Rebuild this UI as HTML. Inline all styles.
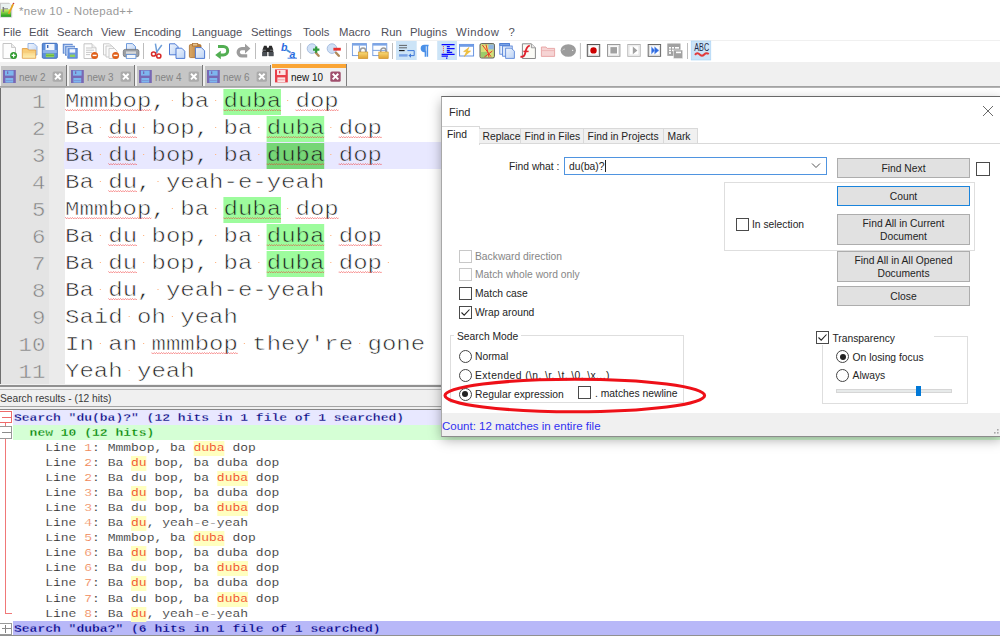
<!DOCTYPE html>
<html lang="en"><head><meta charset="utf-8"><title>*new 10 - Notepad++</title>
<style>
*{box-sizing:border-box;margin:0;padding:0}
html,body{width:1000px;height:639px;overflow:hidden;background:#fff}
body{position:relative;font-family:"Liberation Sans",sans-serif;font-size:12px;color:#000}
.abs{position:absolute}
#title{left:19px;top:3px;font-size:11.5px;letter-spacing:.3px;color:#9a9a9a;white-space:nowrap;line-height:16px}
.mi{position:absolute;top:24px;font-size:11.3px;color:#50505a;line-height:16px;white-space:nowrap}
#tbline{left:0;top:61.6px;width:1000px;height:1px;background:#e4e4e4}
#menuline{left:0;top:40px;width:1000px;height:1px;background:#f0f0f0}
#tabbar{left:0;top:62px;width:1000px;height:25px;background:#f0f0f0}
.tab{position:absolute;top:65.6px;height:20.2px;background:#c6c6c6;font-size:11.5px;color:#848484;white-space:nowrap}
.tab span{position:absolute;left:18px;top:4.4px;line-height:14px;transform:scaleX(.86);transform-origin:0 0}
.tabsep{position:absolute;top:65px;width:1px;height:21px;background:#787878}
#atab{position:absolute;left:272px;top:64px;width:75px;height:23px;background:#f0f0f0;border-right:1px solid #808080}
#atab .bar{position:absolute;left:0;top:0;width:74px;height:4px;background:#faa535}
#atab span{position:absolute;left:19px;top:6px;font-size:11.5px;line-height:14px;color:#111;transform:scaleX(.86);transform-origin:0 0}
#edtop{left:0;top:86.4px;width:1000px;height:1.8px;background:linear-gradient(#9c9c9c,#bcbcbc)}
#editor{left:0;top:88px;width:1000px;height:296px;background:#fff;overflow:hidden}
#lnm{left:1.3px;top:0;width:47.7px;height:297px;background:#e4e4e4}
#fdm{left:49px;top:0;width:16px;height:297px;background:#ebebeb}
#edleft{left:0;top:0;width:1.3px;height:297px;background:#6e6e6e}
.ln{position:absolute;left:0;width:45.4px;text-align:right;font-family:"Liberation Mono",monospace;font-size:20px;line-height:27px;height:27px;color:#808080;transform:scaleX(1.12);transform-origin:100% 0;padding-top:.8px;-webkit-text-stroke:.5px #e4e4e4}
.tl{position:absolute;left:65px;font-family:"Liberation Mono",monospace;font-size:20px;line-height:27px;height:27px;color:#222;white-space:pre;transform:scaleX(1.2);transform-origin:0 0}
.tl{-webkit-text-stroke:.55px #fff}
.tl.c{-webkit-text-stroke-color:#e8e8ff}
.tl b{-webkit-text-stroke-color:#9dfc9d}
.tl b.d{-webkit-text-stroke-color:#76d676}
.tl i{font-style:normal;position:relative}
.tl i::after{content:"";position:absolute;left:5px;top:10px;width:1.2px;height:1.4px;background:#ffb888}
.tl b{font-weight:normal;background:#9dfc9d;padding:1px 0 2px}
.tl b.d{background:#76d676}
.tl u{text-decoration:none;position:relative}
.tl u::after{content:"";position:absolute;left:0;right:0;top:19.4px;height:2px;background:linear-gradient(90deg,rgba(240,40,40,.48) 50%,transparent 50%) 0 0/2px 1px repeat-x,linear-gradient(90deg,transparent 50%,rgba(240,40,40,.48) 50%) 0 1px/2px 1px repeat-x}
#split{left:0;top:384px;width:1000px;height:26px;background:#f0f0f0}
#split .l1{position:absolute;left:0;top:1.4px;width:1000px;height:1.4px;background:#909090}
#split .l2{position:absolute;left:0;top:4.8px;width:1000px;height:1px;background:#bcbcbc}
#split .l3{position:absolute;left:0;top:22.4px;width:1000px;height:1px;background:#a4a4a4}
#split .l4{position:absolute;left:0;top:24.9px;width:1000px;height:1px;background:#888}
#srt{left:0;top:391px;font-size:11px;line-height:14px;color:#3a3a3a;transform:scaleX(.93);transform-origin:0 0;white-space:nowrap}
#res{left:0;top:410px;width:1000px;height:229px;background:#fff;overflow:hidden}
.rr{position:absolute;left:13px;width:987px;height:15px}
.rt{position:absolute;left:13.5px;height:15px;line-height:15px;font-family:"Liberation Mono",monospace;font-size:11px;color:#2c2c2c;white-space:pre;transform:scaleX(1.1818);transform-origin:0 0}
.rt{-webkit-text-stroke:.14px #fff}
.rt mark{-webkit-text-stroke-color:#ffffc0}
.rt.h1{font-weight:bold;color:#000080;-webkit-text-stroke:.3px #e8e8ff}
.rt.h1.z{-webkit-text-stroke-color:#b8b8f8}
.rt.h2{font-weight:bold;color:#008000;-webkit-text-stroke:.3px #d5ffd5}
.rt em{font-style:normal;color:#f08858}
.rt mark{background:#ffffc0;color:#f03a20;padding:1.3px 0 1.5px}
.fb{position:absolute;left:-1px;width:13px;height:12.4px;border:1px solid #ee6a6a;background:#fff}
.fb::after{content:"";position:absolute;left:2px;top:4.7px;width:8.6px;height:1px;background:#ee6a6a}
.fb.g{border-color:#999}
.fb.g::after{background:#8c8c8c}
.fb.p::before{content:"";position:absolute;left:4.5px;top:1px;width:1px;height:8px;background:#808080}
.fl{position:absolute;left:5px;width:1px;background:#f07878}
#resbot{left:0;top:635px;width:1000px;height:4px;background:#fff;border-top:1px solid #909090}
#dlgshadow{left:442px;top:98px;width:560px;height:338px;box-shadow:0 3px 12px rgba(0,0,0,.38)}
#dlg{left:441px;top:96px;width:559px;height:341px;background:#fff;border-top:1px solid #686868;border-left:1px solid #a8a8a8;border-bottom:1px solid #8c8c8c;overflow:hidden;font-size:10.3px;color:#242424}
#dlg div{position:absolute;white-space:nowrap}
#dlg .t{line-height:14px;margin-top:1.2px}
#dtitle{left:7px;top:7.2px;font-size:11px;line-height:16px;color:#2a2a2a}
#dx{left:540px;top:8.4px;width:12px;height:12px}
.dtab{top:31px;height:16px;background:#f0f0f0;border:1px solid #d9d9d9;border-left:none;line-height:14px;text-align:left;padding:1px 0 0 3.6px}
#dtab0{left:-1px;top:29.4px;width:39px;height:18.6px;background:#fff;border:1px solid #d9d9d9;border-bottom:none;line-height:14px;padding:1px 0 0 5px}
#dtabline{left:37px;top:46px;width:522px;height:1px;background:#d9d9d9}
.cb{width:13px;height:13px;border:1px solid #4a4a4a;background:#fff}
.cb.dis{border-color:#c8c8c8}
.rb{width:13px;height:13px;border:1px solid #444;border-radius:50%;background:#fff}
.rb.on::after{content:"";position:absolute;left:2.5px;top:2.5px;width:6px;height:6px;border-radius:50%;background:#222}
.btn{background:#e1e1e1;border:1px solid #adadad;text-align:center;line-height:13px;left:395px;width:133px}
.grp{border:1px solid #dedede}
.dis{color:#868686}
#dstat{left:0;top:316px;width:559px;height:23px;background:#f0f0f0}
#dstat span{position:absolute;left:0px;top:5px;font-size:11.5px;line-height:16px;color:#3030f0}
#cur{left:64px;top:54px;width:936px;height:27px;background:#e8e8ff}
</style></head>
<body>
<svg class="abs" style="left:0;top:0" width="18" height="21" viewBox="0 0 18 21"><defs><linearGradient id="gApp" x1="0" y1="0" x2="0" y2="1"><stop offset="0" stop-color="#d6f46a"/><stop offset="1" stop-color="#169a16"/></linearGradient></defs><path d="M0 2.8h9l3.2 2.6v12.2h-12.2z" fill="#c9c9c9"/><rect x="1" y="3.8" width="10" height="5.6" fill="#e9f1f1"/><rect x="1" y="9.2" width="10" height="7.6" fill="url(#gApp)"/><path d="M3.3 7v5" stroke="#7a7a7a" stroke-width="1.5"/><path d="M4 8.8h4" stroke="#8a8a8a" stroke-width="1"/><path d="M8.6 13.8l4.6-9.6" stroke="#e8a31e" stroke-width="1.7"/><circle cx="13.5" cy="3.5" r="0.8" fill="#c8303a"/></svg>
<div class="abs" id="title">*new 10 - Notepad++</div>
<div class="mi" style="left:3px">File</div><div class="mi" style="left:29px">Edit</div><div class="mi" style="left:57px">Search</div><div class="mi" style="left:101px">View</div><div class="mi" style="left:134px">Encoding</div><div class="mi" style="left:192px">Language</div><div class="mi" style="left:251px">Settings</div><div class="mi" style="left:303px">Tools</div><div class="mi" style="left:339px">Macro</div><div class="mi" style="left:381px">Run</div><div class="mi" style="left:410px">Plugins</div><div class="mi" style="left:456px;letter-spacing:.55px">Window</div><div class="mi" style="left:508.4px">?</div>
<div class="abs" id="menuline"></div><div class="abs" id="tbline"></div>
<svg class="abs" style="left:0;top:40px" width="720" height="22" viewBox="0 40 720 22">
<defs>
<linearGradient id="gPage" x1="0" y1="0" x2="1" y2="1"><stop offset="0" stop-color="#f0f5fd"/><stop offset="1" stop-color="#bcd3f5"/></linearGradient>
<linearGradient id="gFold" x1="0" y1="0" x2="0" y2="1"><stop offset="0" stop-color="#f8c468"/><stop offset="1" stop-color="#fdf0b4"/></linearGradient>
<linearGradient id="gGold" x1="0" y1="0" x2="0" y2="1"><stop offset="0" stop-color="#f8dc7a"/><stop offset="1" stop-color="#e0a030"/></linearGradient>
<linearGradient id="gClip" x1="0" y1="0" x2="1" y2="0"><stop offset="0" stop-color="#d9a868"/><stop offset="1" stop-color="#b87a35"/></linearGradient>
</defs>
<!-- pressed backgrounds -->
<rect x="396" y="41" width="20.7" height="19" fill="#cce4f7"/>
<rect x="437.2" y="41" width="19.8" height="19" fill="#cce4f7"/>
<rect x="691.2" y="41" width="19.6" height="19" fill="#cce4f7" stroke="#a6d2f5" stroke-width="0.6"/>
<!-- separators -->
<g stroke="#bdbdbd" stroke-width="1"><path d="M143.5 43v16M209.5 43v16M255.5 43v16M300.6 43v16M346.5 43v16M392.5 43v16M580.4 43v16M687.5 43v16"/></g>
<!-- 1 new -->
<path d="M3 43.5h8.5l4 4v11h-12.5z" fill="#fdfdfd" stroke="#c4c4c4" stroke-width="1"/><path d="M11.5 43.5v4h4" fill="#ececec" stroke="#c4c4c4" stroke-width="0.8"/>
<circle cx="13.6" cy="55.4" r="3.5" fill="#2e9a2e"/><path d="M11.6 55.4h4M13.6 53.4v4" stroke="#fff" stroke-width="1.3"/>
<!-- 2 open -->
<path d="M28 43.5h6l3 3v8.5h-9z" fill="url(#gPage)" stroke="#7da2dc" stroke-width="0.8"/>
<path d="M22.3 48.5h5l1.2 1.5h7.2v8.3h-13.4z" fill="url(#gFold)" stroke="#e09a40" stroke-width="0.8"/>
<path d="M22.5 52h13" stroke="#f3c46e" stroke-width="0.8"/>
<!-- 3 save -->
<rect x="42.3" y="43.3" width="15" height="15" rx="1" fill="#5c8fdc" stroke="#3a68b8" stroke-width="0.9"/>
<rect x="45.5" y="44" width="9" height="6" fill="#f2f6fd"/><rect x="47" y="45" width="1.4" height="3" fill="#3a68b8"/>
<rect x="45.8" y="53.6" width="8.4" height="3.6" fill="#8fd05a"/><path d="M46 55.4h8" stroke="#5fae3a" stroke-width="0.8"/>
<rect x="42.8" y="50" width="14" height="3" fill="#8fb3ea"/>
<!-- 4 save all -->
<g stroke="#4a78c8" stroke-width="0.8"><rect x="63.2" y="44.2" width="9" height="9" fill="#8db0e8"/><rect x="65.4" y="46.2" width="9" height="9" fill="#8db0e8"/><rect x="67.8" y="48.4" width="9.4" height="9.8" fill="#6b98e0"/></g><path d="M64.8 54v-8.400h8.200M67.200 56v-8.200h8" stroke="#eef3fc" stroke-width="0.700" fill="none"/>
<rect x="69.6" y="49.2" width="5.6" height="3.4" fill="#f2f6fd"/><rect x="70" y="54.6" width="5" height="2.4" fill="#8fd05a"/>
<!-- 5 close -->
<path d="M84 43.8h8l4 4v10.7h-12z" fill="#fdfdfd" stroke="#c4c4c4" stroke-width="1"/><path d="M92 43.8v4h4" fill="#ececec" stroke="#c4c4c4" stroke-width="0.8"/>
<path d="M86 48h6M86 50.2h8M86 52.4h6M86 54.6h4" stroke="#b9b9b9" stroke-width="0.8"/>
<circle cx="94.6" cy="55.4" r="3.5" fill="#e0601a"/><path d="M92.6 55.4h4" stroke="#fff" stroke-width="1.4"/>
<!-- 6 close all -->
<g fill="#fbfbfb" stroke="#c6c6c6" stroke-width="0.9"><path d="M103.5 43.8h6l3 3v8.2h-9z"/><path d="M106 46h6l3 3v8h-9z"/><path d="M109 48.4h5.4l2.6 2.6v7.5h-8z"/></g>
<circle cx="115.6" cy="55.4" r="3.5" fill="#e0601a"/><path d="M113.6 55.4h4" stroke="#fff" stroke-width="1.4"/>
<!-- 7 print -->
<path d="M126.5 43.6h6l3 3v4.4h-9z" fill="url(#gPage)" stroke="#5e8fd8" stroke-width="0.9"/>
<rect x="123.3" y="49.4" width="15.6" height="7.4" rx="2" fill="#9a9ea3" stroke="#6e7277" stroke-width="0.8"/>
<rect x="126" y="51.4" width="10" height="2.4" fill="#d5d8db"/>
<rect x="126.3" y="54.6" width="9.6" height="3.8" fill="#f4f8fd" stroke="#5e8fd8" stroke-width="0.8"/>
<!-- 8 cut -->
<path d="M155.4 43.6l1.6 9.5M161.8 45l-6.2 8.6" stroke="#6f9fd8" stroke-width="1.5" fill="none"/>
<circle cx="153.6" cy="54" r="2.1" fill="none" stroke="#d82a2a" stroke-width="1.5"/><circle cx="158.8" cy="56" r="2.1" fill="none" stroke="#d82a2a" stroke-width="1.5"/>
<!-- 9 copy -->
<path d="M169.5 43.8h5.6l3 3v8h-8.6z" fill="url(#gPage)" stroke="#3f6fd0" stroke-width="0.9"/>
<path d="M176 48.2h5.8l3 3v7.2h-8.8z" fill="url(#gPage)" stroke="#3f6fd0" stroke-width="0.9"/>
<!-- 10 paste -->
<rect x="189.4" y="44.6" width="11.6" height="13" rx="1.2" fill="url(#gClip)" stroke="#a86c2c" stroke-width="0.8"/>
<rect x="192.6" y="43.4" width="5.2" height="2.6" fill="#e8c48e" stroke="#a86c2c" stroke-width="0.7"/>
<path d="M195.4 47.6h6l3.2 3.2v7.6h-9.2z" fill="url(#gPage)" stroke="#3f6fd0" stroke-width="0.9"/>
<!-- 11 undo -->
<path d="M218 46.4h5.4a4.3 4.3 0 0 1 0 8.6h-3.2" fill="none" stroke="#52ae52" stroke-width="3"/>
<path d="M215.2 55l5.6-4.2v8.400z" fill="#52ae52"/>
<!-- 12 redo -->
<path d="M247.4 48.6h-5.6a3.6 3.6 0 0 0 0 7.2h5.4" fill="none" stroke="#9c9c9c" stroke-width="3.3"/>
<path d="M250.4 48.6l-5.4-4.800v9.600z" fill="#9c9c9c"/>
<!-- 13 find binoculars -->
<path d="M262.6 49.4l1.4-3.6h2.6l0.6 2h1.4l0.6-2h2.6l1.4 3.6v6.6h-4.6v-4h-1.4v4h-4.6z" fill="#2b2b2b"/>
<rect x="262.2" y="52" width="4.6" height="4.2" fill="#4a4f55"/><rect x="269" y="52" width="4.6" height="4.2" fill="#4a4f55"/>
<path d="M263 50.2h3M270 50.2h3" stroke="#8a9098" stroke-width="0.8"/>
<!-- 14 replace -->
<g font-family="Liberation Sans,sans-serif" font-weight="bold" font-size="10.500" fill="#2a6be0"><text x="281" y="51" font-style="italic">b</text><text x="289.6" y="58.4" font-style="italic">a</text></g>
<path d="M286.600 50l4 2.600" stroke="#4a90d8" stroke-width="1.800"/><path d="M287.600 58.200h9.400" stroke="#2a6be0" stroke-width="0.900"/>
<!-- 15 zoom in -->
<circle cx="312" cy="48.6" r="4.8" fill="#cfe0f6" stroke="#a9bfe0" stroke-width="1"/><path d="M315.800 52.800l2.800 3" stroke="#b08a5a" stroke-width="2.400" stroke-linecap="round"/>
<path d="M313 49.6h6.4M316.2 46.4v6.4" stroke="#2f9a3a" stroke-width="2.2"/>
<!-- 16 zoom out -->
<circle cx="332" cy="48.6" r="4.8" fill="#cfe0f6" stroke="#a9bfe0" stroke-width="1"/><path d="M336 52.800l2.800 3" stroke="#b08a5a" stroke-width="2.400" stroke-linecap="round"/>
<rect x="333.4" y="47.8" width="7.4" height="2.8" fill="#e83030"/>
<!-- 17 sync v -->
<rect x="352.4" y="43.6" width="14" height="12" fill="#fcfdff" stroke="#6f98dc" stroke-width="0.9"/><rect x="352.4" y="43.6" width="14" height="2" fill="#7aa4e6"/><path d="M359.4 45.6v10" stroke="#6f98dc" stroke-width="0.9"/>
<path d="M360.4 52.2v-1.6a2.6 2.6 0 0 1 5.2 0v1.6" fill="none" stroke="#9a9a9a" stroke-width="1.5"/><rect x="358.4" y="52" width="9.4" height="6.6" fill="url(#gGold)" stroke="#c98a20" stroke-width="0.6"/>
<!-- 18 sync h -->
<rect x="372.8" y="43.6" width="14" height="12" fill="#fcfdff" stroke="#6f98dc" stroke-width="0.9"/><rect x="372.8" y="43.6" width="14" height="2" fill="#7aa4e6"/><path d="M372.8 50.4h14" stroke="#6f98dc" stroke-width="0.9"/>
<path d="M380.8 52.2v-1.6a2.6 2.6 0 0 1 5.2 0v1.6" fill="none" stroke="#9a9a9a" stroke-width="1.5"/><rect x="378.8" y="52" width="9.4" height="6.6" fill="url(#gGold)" stroke="#c98a20" stroke-width="0.6"/>
<!-- 19 wrap -->
<path d="M399 45.4h8M399 47.8h8" stroke="#555" stroke-width="0.9"/><path d="M399 50.6h5.6" stroke="#111" stroke-width="1.1"/>
<path d="M407.4 50.6h6.8v5h-4" fill="none" stroke="#3f78d8" stroke-width="1"/><path d="M408.4 55.6l2.6-2.2v4.4z" fill="#3f78d8"/>
<rect x="399" y="54.2" width="8.6" height="2.4" fill="#7aa4e6"/>
<!-- 20 pilcrow -->
<path d="M428.6 45.6h-4.2a3 3 0 0 0 0 6h1v5.2M427.4 45.6v11.2" fill="none" stroke="#4a90e8" stroke-width="1.5"/><path d="M421.4 48.6a3 3 0 0 1 3-3h1.4v6h-1.4a3 3 0 0 1-3-3z" fill="#4a90e8"/>
<!-- 21 indent guide -->
<g stroke="#0a0aff" stroke-width="1.2"><path d="M441.6 44.6h13M446.8 46.6h3M446.8 48.6h7.8M446.8 50.6h3M446.8 52.4h5.4M441.6 54.4h13M441.6 56.2h6.4M446 58.2h1.4"/></g>
<path d="M443.4 46.2v6.6" stroke="#f04040" stroke-width="1" stroke-dasharray="1 1"/>
<!-- 22 UDL -->
<rect x="459.6" y="44.4" width="14" height="11.6" fill="#fcfdff" stroke="#5a8ade" stroke-width="0.9"/><rect x="459.6" y="44.4" width="14" height="2.4" fill="#6f9ce6"/>
<path d="M469 47.4l-5.4 4.2h3l-2.4 5 6.4-5.6h-3.2z" fill="#f4c63a" stroke="#e0a828" stroke-width="0.5"/>
<!-- 23 doc map -->
<rect x="480" y="43.6" width="14.4" height="14.4" rx="1.5" fill="#d4e07a" stroke="#5a5a5a" stroke-width="1"/>
<rect x="488.4" y="44.4" width="5.4" height="5" fill="#8fb4e0"/><rect x="481" y="52" width="6" height="5" fill="#9ccc6a"/><rect x="484" y="46" width="4" height="5" fill="#f0e070"/>
<path d="M482.4 45l8.6 11.6M492.4 51l-8 6M486 44.6l3 12.6" stroke="#e8382a" stroke-width="1" fill="none"/>
<!-- 24 doc list -->
<g stroke="#4a7ad4" stroke-width="0.8"><rect x="499.8" y="43.6" width="9.6" height="10.6" fill="#e6effc"/><rect x="499.8" y="43.6" width="9.6" height="1.8" fill="#7aa4e6"/><rect x="502.6" y="46" width="9.6" height="10.2" fill="#dce8fa"/><path d="M505.6 48.2h5.8l3 3v7.2h-8.8z" fill="url(#gPage)"/></g>
<!-- 25 func list -->
<path d="M522.4 43.8h9l4 4v10.7h-13z" fill="#fbfbf6" stroke="#8a8a8a" stroke-width="1"/><path d="M531.4 43.8v4h4" fill="#e6e6e6" stroke="#8a8a8a" stroke-width="0.8"/>
<path d="M520.4 56.6c3 .6 4.4-1 5-4.2c.6-3.2 1.2-6.4 4.4-6.8" fill="none" stroke="#e0242e" stroke-width="1.9"/><path d="M523.4 51.4h5.2" stroke="#e0242e" stroke-width="1.5"/>
<!-- 26 folder disabled -->
<path d="M541.4 47h4.6l1.2 1.4h7.4v8h-13.2z" fill="#f6d4d4" stroke="#e6a2a2" stroke-width="0.9"/><path d="M541.6 50.6h13" stroke="#eab0b0" stroke-width="0.8"/>
<!-- 27 monitoring -->
<ellipse cx="568.3" cy="50.5" rx="7.7" ry="6.3" fill="#9c9c9c"/><path d="M562.4 50.4c.6-1 1.6-1.4 2.6-1.2" stroke="#dcdcdc" stroke-width="0.8" fill="none"/><circle cx="572.6" cy="50.4" r="0.7" fill="#e8e8e8"/>
<!-- 28 record -->
<rect x="587.3" y="44.5" width="12.4" height="11.8" fill="#fff" stroke="#555" stroke-width="1"/><rect x="588.6" y="45.8" width="9.8" height="9.2" fill="none" stroke="#d8d8d8" stroke-width="0.8"/><circle cx="593.5" cy="50.4" r="3.2" fill="#cc0000"/>
<!-- 29 stop -->
<rect x="607.5" y="44.5" width="12.4" height="11.8" fill="#fff" stroke="#9a9a9a" stroke-width="1"/><rect x="608.8" y="45.8" width="9.8" height="9.2" fill="none" stroke="#dedede" stroke-width="0.8"/><rect x="610.4" y="47.1" width="6.6" height="6.4" fill="#a0a0a0"/>
<!-- 30 play -->
<rect x="627.8" y="44.5" width="12.4" height="11.8" fill="#fff" stroke="#b4b4b4" stroke-width="1"/><rect x="629.1" y="45.8" width="9.8" height="9.2" fill="none" stroke="#e2e2e2" stroke-width="0.8"/><path d="M632.8 46.6l4.6 3.8-4.6 3.8z" fill="#a0a0a0"/>
<!-- 31 play multi -->
<rect x="648.2" y="44.5" width="12.4" height="11.8" fill="#fff" stroke="#666" stroke-width="1"/><rect x="649.5" y="45.8" width="9.8" height="9.2" fill="none" stroke="#d8d8d8" stroke-width="0.8"/><path d="M651.4 46.8l3.6 3.6-3.6 3.6zM654.6 46.8l4.4 3.6-4.4 3.6z" fill="#2f6ae0" stroke="#7aa4f0" stroke-width="0.5"/>
<!-- 32 save macro -->
<rect x="667.3" y="43.5" width="13.2" height="12.4" fill="#a2a2a2"/><rect x="673.4" y="50" width="9.4" height="8.6" fill="#a2a2a2" stroke="#fff" stroke-width="0.5"/>
<g fill="#fff"><rect x="669" y="47" width="2" height="1.6"/><rect x="672" y="47" width="2" height="1.6"/><rect x="675" y="47" width="4" height="1.6"/><rect x="669" y="49.6" width="2" height="1.6"/><rect x="672" y="49.6" width="1.2" height="1.6"/><rect x="669" y="52.2" width="2" height="1.6"/><rect x="676" y="51.6" width="5" height="1.6"/></g>
<!-- 33 ABC -->
<text x="694.3" y="51" font-family="Liberation Sans,sans-serif" font-size="10.2" fill="#1e2a4a" textLength="14.8" lengthAdjust="spacingAndGlyphs">ABC</text>
<path d="M695 54.8c1.6-2 3.2-2 4.6-.4s3 1.600 4.600 0s2.800-1.600 4.600-.4" fill="none" stroke="#e23a3a" stroke-width="2.100"/>
</svg>
<div class="abs" id="tabbar"></div>
<div class="tab" style="left:1px;width:65.4px"><span>new 2</span></div><div class="tab" style="left:69px;width:65.4px"><span>new 3</span></div><div class="tab" style="left:137px;width:65.4px"><span>new 4</span></div><div class="tab" style="left:205px;width:65.2px"><span>new 6</span></div><div class="tabsep" style="left:66px"></div><div class="tabsep" style="left:134px"></div><div class="tabsep" style="left:202px"></div><div class="tabsep" style="left:270px"></div>
<div id="atab"><div class="bar"></div><span>new 10</span></div>
<svg class="abs" style="left:0;top:62px" width="350" height="26" viewBox="0 62 350 26"><rect x="3" y="70" width="12.8" height="13" fill="#7868b4"/><rect x="5" y="70.6" width="8.6" height="5" fill="#7db6ee"/><rect x="7" y="71.4" width="1.3" height="2.6" fill="#7868b4"/><rect x="5.4" y="78" width="7.8" height="4.6" fill="#7db6ee"/><path d="M6 80.4h6.6" stroke="#7868b4" stroke-width="0.7" opacity=".6"/><rect x="52.6" y="71.4" width="10.4" height="10.4" rx="1.6" fill="#ababab"/><path d="M55.0 73.80000000000001l5.6 5.6M60.6 73.80000000000001l-5.6 5.6" stroke="#fff" stroke-width="2"/><rect x="71" y="70" width="12.8" height="13" fill="#7868b4"/><rect x="73" y="70.6" width="8.6" height="5" fill="#7db6ee"/><rect x="75" y="71.4" width="1.3" height="2.6" fill="#7868b4"/><rect x="73.4" y="78" width="7.8" height="4.6" fill="#7db6ee"/><path d="M74 80.4h6.6" stroke="#7868b4" stroke-width="0.7" opacity=".6"/><rect x="120.6" y="71.4" width="10.4" height="10.4" rx="1.6" fill="#ababab"/><path d="M123.0 73.80000000000001l5.6 5.6M128.6 73.80000000000001l-5.6 5.6" stroke="#fff" stroke-width="2"/><rect x="139" y="70" width="12.8" height="13" fill="#7868b4"/><rect x="141" y="70.6" width="8.6" height="5" fill="#7db6ee"/><rect x="143" y="71.4" width="1.3" height="2.6" fill="#7868b4"/><rect x="141.4" y="78" width="7.8" height="4.6" fill="#7db6ee"/><path d="M142 80.4h6.6" stroke="#7868b4" stroke-width="0.7" opacity=".6"/><rect x="188.6" y="71.4" width="10.4" height="10.4" rx="1.6" fill="#ababab"/><path d="M191.0 73.80000000000001l5.6 5.6M196.6 73.80000000000001l-5.6 5.6" stroke="#fff" stroke-width="2"/><rect x="207" y="70" width="12.8" height="13" fill="#7868b4"/><rect x="209" y="70.6" width="8.6" height="5" fill="#7db6ee"/><rect x="211" y="71.4" width="1.3" height="2.6" fill="#7868b4"/><rect x="209.4" y="78" width="7.8" height="4.6" fill="#7db6ee"/><path d="M210 80.4h6.6" stroke="#7868b4" stroke-width="0.7" opacity=".6"/><rect x="256.6" y="71.4" width="10.4" height="10.4" rx="1.6" fill="#ababab"/><path d="M259.0 73.80000000000001l5.6 5.6M264.6 73.80000000000001l-5.6 5.6" stroke="#fff" stroke-width="2"/><rect x="275" y="69.4" width="12.8" height="13" fill="#e8404a"/><rect x="277" y="70.0" width="8.6" height="5" fill="#fbe4e4"/><rect x="279" y="70.80000000000001" width="1.3" height="2.6" fill="#e8404a"/><rect x="277.4" y="77.4" width="7.8" height="4.6" fill="#fbe4e4"/><path d="M278 79.80000000000001h6.6" stroke="#e8404a" stroke-width="0.7" opacity=".6"/><rect x="330.3" y="71.4" width="10.4" height="10.4" rx="1.6" fill="#a0506e"/><path d="M332.7 73.80000000000001l5.6 5.6M338.3 73.80000000000001l-5.6 5.6" stroke="#fff" stroke-width="2"/></svg>
<div class="abs" id="edtop"></div>
<div class="abs" id="editor"><div class="abs" id="edleft"></div><div class="abs" id="lnm"></div><div class="abs" id="fdm"></div><div class="abs" id="cur"></div>
<div class="ln" style="top:0px">1</div><div class="tl" style="top:0px"><u>Mmmbop</u>,<i> </i>ba<i> </i><b><u>duba</u></b><i> </i><u>dop</u></div>
<div class="ln" style="top:27px">2</div><div class="tl" style="top:27px">Ba<i> </i><u>du</u><i> </i>bop,<i> </i>ba<i> </i><b><u>duba</u></b><i> </i><u>dop</u></div>
<div class="ln" style="top:54px">3</div><div class="tl c" style="top:54px">Ba<i> </i><u>du</u><i> </i>bop,<i> </i>ba<i> </i><b class="d"><u>duba</u></b><i> </i><u>dop</u></div>
<div class="ln" style="top:81px">4</div><div class="tl" style="top:81px">Ba<i> </i><u>du</u>,<i> </i>yeah-e-yeah</div>
<div class="ln" style="top:108px">5</div><div class="tl" style="top:108px"><u>Mmmbop</u>,<i> </i>ba<i> </i><b><u>duba</u></b><i> </i><u>dop</u></div>
<div class="ln" style="top:135px">6</div><div class="tl" style="top:135px">Ba<i> </i><u>du</u><i> </i>bop,<i> </i>ba<i> </i><b><u>duba</u></b><i> </i><u>dop</u></div>
<div class="ln" style="top:162px">7</div><div class="tl" style="top:162px">Ba<i> </i><u>du</u><i> </i>bop,<i> </i>ba<i> </i><b><u>duba</u></b><i> </i><u>dop</u><i> </i></div>
<div class="ln" style="top:189px">8</div><div class="tl" style="top:189px">Ba<i> </i><u>du</u>,<i> </i>yeah-e-yeah</div>
<div class="ln" style="top:216px">9</div><div class="tl" style="top:216px">Said<i> </i>oh<i> </i>yeah</div>
<div class="ln" style="top:243px">10</div><div class="tl" style="top:243px">In<i> </i>an<i> </i><u>mmmbop</u><i> </i>they're<i> </i>gone</div>
<div class="ln" style="top:270px">11</div><div class="tl" style="top:270px">Yeah<i> </i>yeah</div>
</div>
<div class="abs" id="split"><div class="l1"></div><div class="l2"></div><div class="l3"></div><div class="l4"></div></div>
<div class="abs" id="srt">Search results - (12 hits)</div>
<div class="abs" id="res">
<div class="rr" style="top:0;height:15.8px;background:#e8e8ff"></div><div class="rr" style="top:14.98px;background:#d5ffd5"></div><div class="rr" style="top:211.02px;height:14px;background:#b8b8f8"></div>
<div class="fl" style="top:13px;height:190px"></div><div class="fl" style="top:203px;height:1px;width:7px"></div><div class="fb" style="top:1.1px"></div><div class="fb g" style="top:16.2px"></div><div class="fb g p" style="top:212.5px"></div>
<div class="rt h1" style="top:1px">Search "du(ba)?" (12 hits in 1 file of 1 searched)</div>
<div class="rt h2" style="top:16px">  new 10 (12 hits)</div>
<div class="rt" style="top:31px">    Line <em>1</em>: Mmmbop, ba <mark>duba</mark> dop</div>
<div class="rt" style="top:46px">    Line <em>2</em>: Ba <mark>du</mark> bop, ba duba dop</div>
<div class="rt" style="top:61px">    Line <em>2</em>: Ba du bop, ba <mark>duba</mark> dop</div>
<div class="rt" style="top:76px">    Line <em>3</em>: Ba <mark>du</mark> bop, ba duba dop</div>
<div class="rt" style="top:91px">    Line <em>3</em>: Ba du bop, ba <mark>duba</mark> dop</div>
<div class="rt" style="top:106px">    Line <em>4</em>: Ba <mark>du</mark>, yeah-e-yeah</div>
<div class="rt" style="top:121px">    Line <em>5</em>: Mmmbop, ba <mark>duba</mark> dop</div>
<div class="rt" style="top:136px">    Line <em>6</em>: Ba <mark>du</mark> bop, ba duba dop</div>
<div class="rt" style="top:151px">    Line <em>6</em>: Ba du bop, ba <mark>duba</mark> dop</div>
<div class="rt" style="top:166px">    Line <em>7</em>: Ba <mark>du</mark> bop, ba duba dop</div>
<div class="rt" style="top:182px">    Line <em>7</em>: Ba du bop, ba <mark>duba</mark> dop</div>
<div class="rt" style="top:197px">    Line <em>8</em>: Ba <mark>du</mark>, yeah-e-yeah</div>
<div class="rt h1 z" style="top:212px">Search "duba?" (6 hits in 1 file of 1 searched)</div>
</div><div class="abs" id="resbot"></div>
<div class="abs" id="dlgshadow"></div>
<div class="abs" id="dlg">
<div id="dtitle">Find</div><div id="dx"><svg width="12" height="12" viewBox="0 0 12 12"><path d="M1 1L11 11M11 1L1 11" stroke="#6a6a6a" stroke-width="1" fill="none"/></svg></div>
<div id="dtabline"></div><div id="dtab0">Find</div><div class="dtab" style="left:37px;width:42px">Replace</div><div class="dtab" style="left:79px;width:63px">Find in Files</div><div class="dtab" style="left:142px;width:80px">Find in Projects</div><div class="dtab" style="left:222px;width:34px">Mark</div>
<div class="t" style="left:67px;top:62px">Find what :</div><div style="left:122px;top:60px;width:263px;height:18px;border:1px solid #4f94e0;background:#fff"><div class="t" style="left:4px;top:0.4px">du(ba)?</div><div style="left:39.5px;top:2px;width:1px;height:12px;background:#222"></div><svg style="position:absolute;left:246px;top:5px" width="10" height="6" viewBox="0 0 10 6"><path d="M1 0.5L5 4.5L9 0.5" stroke="#555" stroke-width="1" fill="none"/></svg></div>
<div class="btn" style="top:61px;height:20px;padding-top:3px">Find Next</div><div class="cb" style="left:534px;top:65px;width:14px;height:14px"></div><div class="grp" style="left:282px;top:84.5px;width:250.5px;height:69px"></div><div class="btn" style="top:89px;height:20px;padding-top:3px;border:1.6px solid #1a84dc">Count</div><div class="cb" style="left:294px;top:120.7px"></div><div class="t" style="left:310px;top:120px">In selection</div><div class="btn" style="top:116.6px;height:31px;padding-top:2px;white-space:normal">Find All in Current<br>Document</div><div class="btn" style="top:154.2px;height:31px;padding-top:2px;white-space:normal">Find All in All Opened<br>Documents</div><div class="btn" style="top:189px;height:19.5px;padding-top:3px">Close</div>
<div class="cb dis" style="left:17px;top:152.8px"></div><div class="t dis" style="left:33px;top:151.8px">Backward direction</div><div class="cb dis" style="left:17px;top:171.1px"></div><div class="t dis" style="left:33px;top:170.1px">Match whole word only</div><div class="cb" style="left:17px;top:190.1px"></div><div class="t" style="left:33px;top:189.1px">Match case</div><div class="cb" style="left:17px;top:208.5px"><svg style="position:absolute;left:0;top:0" width="11" height="11" viewBox="0 0 11 11"><path d="M1.5 5.5L4.2 8.2L9.5 2.5" stroke="#222" stroke-width="1.1" fill="none"/></svg></div><div class="t" style="left:33px;top:207.5px">Wrap around</div>
<div class="grp" style="left:8px;top:238px;width:234.4px;height:68.2px"></div><div class="t" style="left:12px;top:232px;background:#fff;padding:0 3px">Search Mode</div><div class="rb" style="left:16.5px;top:252.9px"></div><div class="t" style="left:33px;top:251.9px">Normal</div><div class="rb" style="left:16.5px;top:271.7px"></div><div class="t" style="left:33px;top:270.7px;letter-spacing:0.42px">Extended (\n, \r, \t, \0, \x...)</div><div class="rb on" style="left:16.5px;top:290.5px"></div><div class="t" style="left:33px;top:289.5px">Regular expression</div><div class="cb" style="left:136.3px;top:289.2px"></div><div class="t" style="left:153px;top:288.5px">. matches newline</div>
<div class="grp" style="left:380.3px;top:238.6px;width:146px;height:68.4px"></div><div style="left:372px;top:232px;width:120px;height:16px;background:#fff"></div><div class="cb" style="left:374px;top:234px"><svg style="position:absolute;left:0;top:0" width="11" height="11" viewBox="0 0 11 11"><path d="M1.5 5.5L4.2 8.2L9.5 2.5" stroke="#222" stroke-width="1.1" fill="none"/></svg></div><div class="t" style="left:390.4px;top:233.5px">Transparency</div><div class="rb on" style="left:394.2px;top:253.2px"></div><div class="t" style="left:410.6px;top:252.4px">On losing focus</div><div class="rb" style="left:394.2px;top:271.8px"></div><div class="t" style="left:410.6px;top:271px">Always</div><div style="left:394px;top:292.3px;width:116px;height:3.5px;background:#e7eaea;border:1px solid #d6d6d6"></div><div style="left:473.7px;top:288.6px;width:5px;height:10.4px;background:#0078d7"></div>
<div id="dstat"><span>Count: 12 matches in entire file</span><svg style="position:absolute;left:548px;top:12px" width="10" height="10" viewBox="0 0 10 10"><g fill="#a8a8a8"><rect x="7" y="7" width="1.6" height="1.6"/><rect x="4" y="7" width="1.6" height="1.6"/><rect x="7" y="4" width="1.6" height="1.6"/></g></svg></div>
<svg style="position:absolute;left:0;top:0" width="559" height="342" viewBox="0 0 559 342"><ellipse cx="132.8" cy="298.5" rx="129.8" ry="16.3" fill="none" stroke="#ee1018" stroke-width="3.1"/></svg>
</div>
</body></html>
